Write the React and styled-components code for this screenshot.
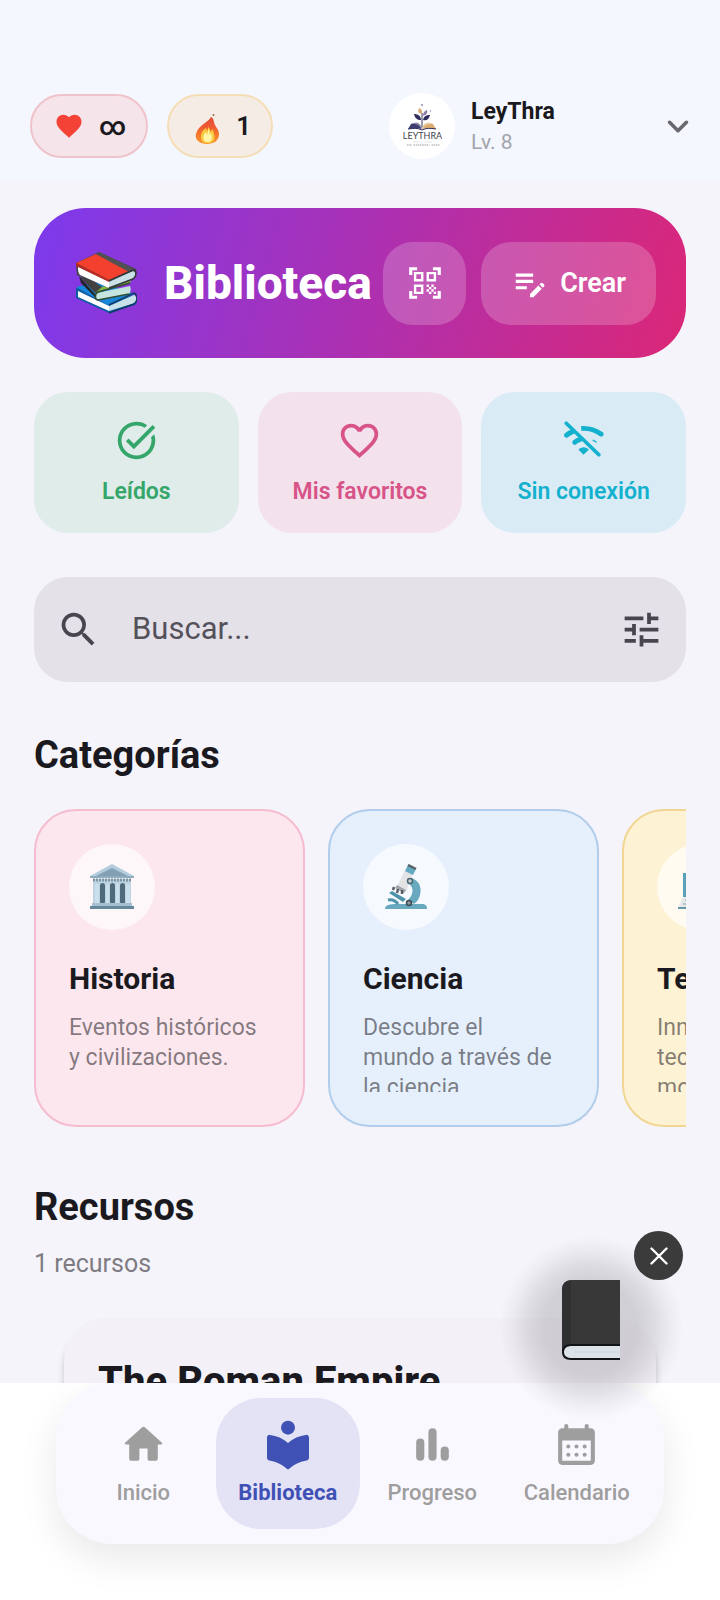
import React from 'react';
import styled, { createGlobalStyle } from 'styled-components';
import {
    MdEditNote,
    MdFavorite,
    MdFavoriteBorder,
    MdQrCodeScanner,
    MdSearch,
    MdTaskAlt,
    MdTune
} from 'react-icons/md';

const categories = [
    {
        id: 'historia',
        name: 'Historia',
        text: 'Eventos históricos\ny civilizaciones.',
        background: '#fce7ee',
        border: '#f5bccf',
        Icon: MuseumIcon
    },
    {
        id: 'ciencia',
        name: 'Ciencia',
        text: 'Descubre el\nmundo a través de\nla ciencia.',
        background: '#e6f0fd',
        border: '#b0cdeb',
        Icon: MicroscopeIcon
    },
    {
        id: 'tecnologia',
        name: 'Tecnología',
        text: 'Innovación y\ntecnología\nmoderna.',
        background: '#fef2d4',
        border: '#f0d692',
        Icon: LaptopIcon
    }
];

const shortcuts = [
    { id: 'read', label: 'Leídos', color: '#34a669', background: '#dfece9', icon: <MdTaskAlt /> },
    { id: 'favorites', label: 'Mis favoritos', color: '#d85388', background: '#f3e2ec', icon: <MdFavoriteBorder /> },
    { id: 'offline', label: 'Sin conexión', color: '#14b1ce', background: '#d9ecf6', icon: <WifiOffIcon /> }
];

const tabs = [
    { id: 'home', label: 'Inicio', Icon: HomeIcon },
    { id: 'library', label: 'Biblioteca', Icon: LibraryIcon },
    { id: 'progress', label: 'Progreso', Icon: BarsIcon },
    { id: 'calendar', label: 'Calendario', Icon: CalendarIcon }
];

const App = () => {
    return (
        <Screen>
            <GlobalStyle />

            <Header>
                <Pill $background="#f5e5eb" $border="#f0c3cb">
                    <MdFavorite size={30} color="#f44336" />
                    <span>∞</span>
                </Pill>
                <Pill $background="#f5ede5" $border="#f5deb6">
                    <FlameIcon />
                    <span>1</span>
                </Pill>
                <Profile>
                    <Avatar><LogoIcon /></Avatar>
                    <ProfileText>
                        <ProfileName>LeyThra</ProfileName>
                        <ProfileLevel>Lv. 8</ProfileLevel>
                    </ProfileText>
                    <ChevronIcon />
                </Profile>
            </Header>

            <Main>
                <Banner>
                    <BooksIcon />
                    <BannerTitle>Biblioteca</BannerTitle>
                    <BannerActions>
                        <ScanButton aria-label="Escanear"><MdQrCodeScanner size={38} /></ScanButton>
                        <CreateButton><MdEditNote size={38} />Crear</CreateButton>
                    </BannerActions>
                </Banner>

                <Shortcuts>
                    {shortcuts.map(item => (
                        <Shortcut key={item.id} $color={item.color} $background={item.background}>
                            {item.icon}
                            {item.label}
                        </Shortcut>
                    ))}
                </Shortcuts>

                <SearchBar>
                    <MdSearch size={45} />
                    <SearchInput type="text" placeholder="Buscar..." aria-label="Buscar" />
                    <FilterButton aria-label="Filtros"><MdTune size={45} /></FilterButton>
                </SearchBar>

                <SectionTitle>Categorías</SectionTitle>
                <CategoryList>
                    {categories.map(({ id, name, text, background, border, Icon }) => (
                        <Category key={id} $background={background} $border={border}>
                            <CategoryBody>
                                <CategoryBadge><Icon /></CategoryBadge>
                                <CategoryName>{name}</CategoryName>
                                <CategoryText>{text}</CategoryText>
                            </CategoryBody>
                        </Category>
                    ))}
                </CategoryList>

                <ResourcesTitle>Recursos</ResourcesTitle>
                <ResourceCount>1 recursos</ResourceCount>
                <Resource>
                    <ResourceName>The Roman Empire</ResourceName>
                </Resource>
            </Main>

            <Footer>
                <TabBar>
                    {tabs.map(({ id, label, Icon }) => (
                        <Tab key={id} href={`#${id}`} $active={id === 'library'}>
                            <TabIcon><Icon /></TabIcon>
                            {label}
                        </Tab>
                    ))}
                </TabBar>
            </Footer>

            <Floating>
                <Glow><BookIcon /></Glow>
                <CloseButton aria-label="Cerrar">
                    <svg width="18" height="18" viewBox="0 0 18 18" fill="none" stroke="#fff" strokeWidth="2.4" strokeLinecap="round">
                        <path d="M1.500 1.500l15 15M16.500 1.500l-15 15" />
                    </svg>
                </CloseButton>
            </Floating>
        </Screen>
    );
}

export default App;

function FlameIcon() {
    return (
        <svg width="30" height="38" viewBox="-3 -6 30 38">
            <defs>
                <linearGradient id="flame" x1="0" y1="0" x2="0" y2="1">
                    <stop offset="0" stopColor="#dd4b39" />
                    <stop offset="0.35" stopColor="#ee5a33" />
                    <stop offset="0.75" stopColor="#f9802a" />
                    <stop offset="1" stopColor="#f9982a" />
                </linearGradient>
            </defs>
            <circle cx="19.500" cy="2" r="1" fill="#a06a50" />
            <path d="M17 4c-2 5-13 8-15 17-1.500 6 4 10 11 10s12-3.500 12-10c0-4-2-5-4-9-1.500-3-1-7-4-8z" fill="url(#flame)" />
            <path d="M12 15c-4 3-5 5-5 9 0 4 2 6 6.500 6s7-2 7-6c0-3-1-5-2-8-1 1-1 2-2 3 0-2-1-3-2-5-1 2-1 3-1 5z" fill="#fbc93f" />
            <path d="M14.500 16c-1 2-1 4-1 6l-2-3c-2 3-2.500 5-2 7 .5 2 2 3 4 3s4.500-1 4.500-4c0-2-.5-4-1-5l-1.500 2c0-2 0-4-1-6z" fill="#fff6a8" />
        </svg>
    );
}

function LogoIcon() {
    return (
        <svg width="66" height="66" viewBox="0 0 66 66">
            <circle cx="33" cy="12" r="1" fill="#8b8ba8" />
            <path d="M33 36V20" stroke="#34325c" strokeWidth="1" />
            <path d="M32.500 21c-4-1-4-4-2-6 3 2 3 4 2 6z" fill="#d9ab72" />
            <path d="M34 23c0-3 1-5 4-6 1 3-1 5-4 6z" fill="#8d7aa8" />
            <path d="M32 27c-4 0-6-2-7-6 4 0 7 2 7 6zM34 27c1-4 3-5 7-5-1 4-3 6-7 5z" fill="#2f2c5c" />
            <circle cx="41.500" cy="18" r=".7" fill="#8d7aa8" />
            <path d="M33 36c-2-7-7-7-11-5l-3 5c6-1 10-1 14 0z" fill="#403d70" />
            <path d="M33 36c2-7 7-7 11-5l3 5c-6-1-10-1-14 0z" fill="#dcae73" />
            <path d="M23 30c5 0 8 2 10 6M43 30c-5 0-8 2-10 6" stroke="#fff" strokeWidth=".6" fill="none" />
            <path d="M19 36c6-1 10-1 14 1 4-2 8-2 14-1" stroke="#2f2c5c" strokeWidth="1" fill="none" />
            <text x="33.500" y="46" textAnchor="middle" fontFamily="Lato, sans-serif" fontSize="9" fill="#44424e">LEYTHRA</text>
            <path d="M24 49h7M36 49h7" stroke="#d5d5dc" strokeWidth=".6" />
            <path d="M18 52h5m1.500 0h16m2 0h8" stroke="#9a9aa5" strokeWidth="1" strokeDasharray="1.500 .7" />
        </svg>
    );
}

function ChevronIcon() {
    return (
        <svg width="44" height="44" viewBox="0 0 24 24" fill="#69696e">
            <path d="M8.120 9.290L12 13.170l3.880-3.880c.39-.39 1.020-.39 1.410 0 .39.39.39 1.020 0 1.410l-4.590 4.590c-.39.39-1.020.39-1.410 0L6.700 10.700c-.39-.39-.39-1.020 0-1.410.39-.38 1.030-.39 1.420 0z" />
        </svg>
    );
}

function BooksIcon() {
    return (
        <svg width="62" height="62" viewBox="0 0 62 62">
            <path d="M1 36l10-4 50 14c1 3 1 5-1 7L34 61 1 46z" fill="#0c5ba5" />
            <path d="M1 35l22-5 37 12-26 12z" fill="#1a86d9" />
            <path d="M3 39l31 15v5L3 45z" fill="#fff" />
            <path d="M34 54l25-11c3 1 3 5 1 8L34 59z" fill="#c7e2e8" />
            <path d="M34 53l25-12c4 2 4 8 0 11L34 61" fill="none" stroke="#123b63" strokeWidth="1.500" />
            <path d="M4 24l20 23-4-2L6 31z" fill="#202326" />
            <path d="M5 25l15 16 10-4-18-12z" fill="#424242" />
            <path d="M20 41l35-10c2-4 1-4-1-2l-27 6z" fill="#84b641" />
            <path d="M22 41l33-7c1 3 1 5-1 8l-31 6c-3-2-3-5-1-7z" fill="#c5e4df" />
            <path d="M55 31L23 40c-4 2-3 8 0 8l31-6" fill="none" stroke="#314c31" strokeWidth="1.600" />
            <path d="M1 11L24 0l37 17c1 4 0 7-3 9L35 36 2 23z" fill="#3f4245" />
            <path d="M1 11l20-9 33 17-20 9z" fill="#f4402f" />
            <path d="M21 2l3-2 36 17-6 3z" fill="#525252" />
            <path d="M1 11l33 17v3L1 14z" fill="#b82a22" />
            <path d="M3 15l31 15v6L5 23c-2-2-2-5-2-8z" fill="#fff" />
            <path d="M34 29l24-10c3 1 3 4 1 7L34 36z" fill="#c9e1e6" />
            <path d="M34 29l24-11c4 1 4 6 0 9L34 36" fill="none" stroke="#33383b" strokeWidth="1.500" />
        </svg>
    );
}

function WifiOffIcon() {
    return (
        <svg viewBox="0 0 24 24" fill="none" stroke="currentColor" strokeLinecap="round">
            <path d="M2.800 2.800L20.200 19.600" strokeWidth="2" />
            <path d="M2.900 9.200Q4.400 8 5.900 7.400" strokeWidth="2.600" />
            <path d="M7.300 13q1.300-1.200 3-1.600" strokeWidth="2.600" />
            <path d="M10.800 5.600q5.800-.4 10.600 3" strokeWidth="2.600" strokeLinecap="butt" />
            <path d="M21.200 8.500l.2.100" strokeWidth="2.600" />
            <path d="M17.200 11.900l1.600.9" strokeWidth=".7" />
            <path d="M9.800 16.800c1.500-1.100 3.100-1.100 4.600 0L12 19.100z" fill="currentColor" strokeWidth=".8" strokeLinejoin="round" />
        </svg>
    );
}

function MuseumIcon() {
    return (
        <svg width="46" height="46" viewBox="0 0 46 46">
            <path d="M4 15h38v25H4z" fill="#bdd3e1" />
            <rect x="11" y="19" width="5" height="21" rx="2.500" fill="#4e6a7b" />
            <rect x="21" y="19" width="5" height="21" rx="2.500" fill="#4e6a7b" />
            <rect x="31" y="19" width="5" height="21" rx="2.500" fill="#4e6a7b" />
            <path d="M6 20h4v20H6zM17 20h3v20h-3zM27 20h3v20h-3zM37 20h4v20h-4z" fill="#c9dfec" />
            <path d="M23 0l22 12v2H1v-2z" fill="#b4cddc" />
            <path d="M23 4l16 8H7z" fill="#829fb3" />
            <path d="M1 13h44" stroke="#6d8da1" />
            <path d="M4 16h38" stroke="#7c97a8" strokeWidth="3" strokeDasharray="2 1" />
            <path d="M3 39h40v3H3z" fill="#a5c0d1" />
            <path d="M1 42h44v3H1z" fill="#67879b" />
        </svg>
    );
}

function MicroscopeIcon() {
    return (
        <svg width="46" height="46" viewBox="0 0 46 46">
            <path d="M28 14c8 2 11 9 9 17-1 4-3 7-6 9l-6-4c5-5 7-12 0-17z" fill="#69a9bf" />
            <path d="M2 44c1-4 7-4 16-4h20c5 0 6 2 6 5H2z" fill="#69a9bf" />
            <path d="M6 29l3-2 14 8-3 3z" fill="#4f93aa" />
            <path d="M5 36c4-1 7 0 10 4" fill="none" stroke="#4f93aa" strokeWidth="3" />
            <path d="M22 6l8 4-7 18-9-5z" fill="#e2e3e5" />
            <path d="M14 21l9 5-2 3-9-5z" fill="#a2a5aa" />
            <path d="M11 23l-1 3M15 25l-1 4M19 26v4" stroke="#565c62" strokeWidth="2.400" />
            <path d="M25 1l8 4-3 6-8-4z" fill="#62a9c1" />
            <path d="M25 1l8 4" stroke="#596269" strokeWidth="2.500" />
            <circle cx="27" cy="17" r="2.500" fill="#c6cdd1" stroke="#496775" strokeWidth="1.500" />
            <circle cx="26" cy="39" r="2.500" fill="#8f989d" stroke="#3a4c55" strokeWidth="1.500" />
        </svg>
    );
}

function LaptopIcon() {
    return (
        <svg width="46" height="46" viewBox="0 0 46 46">
            <path d="M6 9h34v26H6z" fill="#5ba0ba" />
            <path d="M9 12h28v20H9z" fill="#a9d9ea" />
            <path d="M6 33h34l5 11H1z" fill="#e6e8ea" />
            <path d="M8 36h30M6 40h34" stroke="#adb5bb" strokeWidth="1.500" strokeDasharray="3 1" />
            <path d="M1 43h44v2H1z" fill="#6597a6" />
        </svg>
    );
}

function BookIcon() {
    return (
        <svg width="58" height="80" viewBox="0 0 58 80">
            <path d="M10 0h48v66H8l-8 6V10Q0 0 10 0z" fill="#383838" />
            <path d="M9 0v64q-6 0-9 6V10Q0 1 9 0z" fill="#2f3032" />
            <path d="M58 64H9c-6 0-9 3-9 8s3 8 9 8h49z" fill="#101417" />
            <path d="M58 66H10c-5 0-8 2-8 6s3 6 8 6h48z" fill="#dbe3e8" />
            <path d="M58 72H12" stroke="#cbd4da" />
        </svg>
    );
}

function HomeIcon() {
    return (
        <svg width="49" height="49" viewBox="0 0 24 24" fill="currentColor">
            <path d="M10 19v-5h4v5c0 .55.45 1 1 1h3c.55 0 1-.45 1-1v-7h1.700c.46 0 .68-.57.33-.87L12.670 3.600c-.38-.34-.96-.34-1.340 0l-8.360 7.530c-.34.3-.13.87.33.87H5v7c0 .55.45 1 1 1h3c.55 0 1-.45 1-1z" />
        </svg>
    );
}

function LibraryIcon() {
    return (
        <svg width="56" height="56" viewBox="0 0 24 24" fill="currentColor">
            <circle cx="12" cy="5" r="3" />
            <path d="M12 11.550C9.900 9.600 7.100 8.400 4.300 8.100 3.600 8 3 8.600 3 9.300v8.600c0 .6.450 1.100 1.050 1.200 2.500.4 4.900 1.400 6.800 3l.6.500c.3.300.8.300 1.100 0l.6-.5c1.900-1.600 4.300-2.600 6.800-3 .6-.1 1.050-.6 1.050-1.200V9.300c0-.7-.6-1.300-1.300-1.200-2.800.3-5.600 1.500-7.700 3.450z" />
        </svg>
    );
}

function BarsIcon() {
    return (
        <svg width="49" height="49" viewBox="0 0 24 24" fill="currentColor">
            <rect x="4" y="9" width="4" height="11" rx="2" />
            <rect x="10" y="4" width="4" height="16" rx="2" />
            <rect x="16" y="13" width="4" height="7" rx="2" />
        </svg>
    );
}

function CalendarIcon() {
    return (
        <svg width="49" height="49" viewBox="0 0 24 24" fill="currentColor">
            <path d="M19 4h-1V3c0-.55-.45-1-1-1s-1 .45-1 1v1H8V3c0-.55-.45-1-1-1s-1 .45-1 1v1H5c-1.110 0-2 .9-2 2v14c0 1.100.89 2 2 2h14c1.100 0 2-.9 2-2V6c0-1.100-.9-2-2-2zm0 16H5V10h14v10z" />
            <path d="M8 13h.01M12 13h.01M16 13h.01M8 17h.01M12 17h.01M16 17h.01" stroke="currentColor" strokeWidth="2" strokeLinecap="round" />
        </svg>
    );
}

const GlobalStyle = createGlobalStyle`
  * {
    box-sizing: border-box;
  }

  body {
    margin: 0;
    font-family: Roboto, "Liberation Sans", sans-serif;
    color: #1b1920;
    background: #ffffff;
  }

  button, input {
    font: inherit;
    border: 0;
    padding: 0;
  }

  svg {
    display: block;
    flex-shrink: 0;
  }
`;

const Screen = styled.div`
  position: relative;
  display: flex;
  flex-direction: column;
  height: 100vh;
  overflow: hidden;
`;

const Header = styled.header`
  display: flex;
  align-items: center;
  padding: 93px 20px 20px 30px;
  background: #f4f7fe;
`;

const Pill = styled.div`
  display: flex;
  align-items: center;
  gap: 15px;
  height: 64px;
  margin-right: 19px;
  padding: 0 20px 0 22px;
  border: 2px solid ${props => props.$border};
  border-radius: 32px;
  background: ${props => props.$background};
  font-size: 26px;
  font-weight: 600;
`;

const Profile = styled.div`
  display: flex;
  align-items: center;
  width: 311px;
  margin-left: auto;
`;

const Avatar = styled.div`
  width: 66px;
  height: 66px;
  border-radius: 50%;
  background: #ffffff;
`;

const ProfileText = styled.div`
  flex: 1;
  padding: 2px 0 0 16px;
`;

const ProfileName = styled.div`
  font-size: 23px;
  font-weight: 700;
  line-height: 30px;
`;

const ProfileLevel = styled.div`
  font-size: 21px;
  line-height: 30px;
  color: #a3a5ab;
`;

const Main = styled.main`
  flex: 1;
  min-height: 0;
  padding: 29px 34px 0;
  overflow: hidden;
  background: #f6f4fb;
`;

const Banner = styled.section`
  display: flex;
  align-items: center;
  height: 150px;
  padding: 0 30px 0 41px;
  border-radius: 52px;
  background: linear-gradient(105deg, #7c3aed, #db2777);
  color: #ffffff;
`;

const BannerTitle = styled.h1`
  margin: 0 0 0 27px;
  font-size: 46px;
  font-weight: 800;
  line-height: 54px;
`;

const BannerActions = styled.div`
  display: flex;
  gap: 15px;
  margin-left: auto;
`;

const ScanButton = styled.button`
  display: flex;
  align-items: center;
  justify-content: center;
  width: 83px;
  height: 83px;
  border-radius: 30px;
  background: rgba(255, 255, 255, 0.2);
  color: #ffffff;
`;

const CreateButton = styled(ScanButton)`
  gap: 11px;
  width: auto;
  padding: 0 30px;
  font-size: 27px;
  font-weight: 600;
`;

const Shortcuts = styled.nav`
  display: grid;
  grid-template-columns: repeat(3, 1fr);
  gap: 19px;
  margin-top: 34px;
`;

const Shortcut = styled.button`
  display: flex;
  flex-direction: column;
  align-items: center;
  gap: 14px;
  height: 141px;
  padding-top: 26px;
  border-radius: 34px;
  background: ${props => props.$background};
  color: ${props => props.$color};
  font-size: 23px;
  font-weight: 600;
  line-height: 30px;

  svg {
    width: 45px;
    height: 45px;
  }
`;

const SearchBar = styled.div`
  display: flex;
  align-items: center;
  height: 105px;
  margin-top: 44px;
  padding: 0 22px;
  border-radius: 34px;
  background: #e4e1e8;
  color: #49454f;
`;

const SearchInput = styled.input`
  flex: 1;
  min-width: 0;
  padding: 0 0 2px 31px;
  background: transparent;
  font-size: 31px;
  color: #49454f;
  outline: none;

  &::placeholder {
    color: #55515b;
    opacity: 1;
  }
`;

const FilterButton = styled.button`
  background: transparent;
  color: #49454f;
`;

const SectionTitle = styled.h2`
  margin: 51px 0 32px;
  font-size: 38px;
  font-weight: 700;
  line-height: 44px;
`;

const ResourcesTitle = styled(SectionTitle)`
  margin: 58px 0 21px;
`;

const CategoryList = styled.div`
  display: flex;
  gap: 23px;
  overflow-x: auto;
  scrollbar-width: none;
`;

const Category = styled.article`
  flex: 0 0 271px;
  height: 318px;
  padding: 33px;
  border: 2px solid ${props => props.$border};
  border-radius: 42px;
  background: ${props => props.$background};
`;

const CategoryBody = styled.div`
  height: 100%;
  overflow: hidden;
`;

const CategoryBadge = styled.div`
  display: flex;
  align-items: center;
  justify-content: center;
  width: 86px;
  height: 86px;
  border-radius: 50%;
  background: rgba(255, 255, 255, 0.65);
`;

const CategoryName = styled.h3`
  margin: 30px 0 15px;
  font-size: 30px;
  font-weight: 700;
  line-height: 38px;
`;

const CategoryText = styled.p`
  margin: 0;
  font-size: 23px;
  line-height: 30px;
  white-space: pre;
  color: rgba(27, 25, 32, 0.55);
`;

const ResourceCount = styled.p`
  margin: 0;
  font-size: 25px;
  line-height: 28px;
  color: #7e7c82;
`;

const Resource = styled.article`
  margin: 40px 30px 0;
  padding: 40px 34px;
  border-radius: 42px;
  background: #f3f1f7;
  box-shadow: 0 8px 6px rgba(0, 0, 0, 0.2);
`;

const ResourceName = styled.h3`
  margin: 0;
  font-size: 40px;
  font-weight: 800;
  line-height: 48px;
`;

const Footer = styled.footer`
  padding: 0 56px 56px;
  background: #ffffff;
  overflow: hidden;
`;

const TabBar = styled.nav`
  display: flex;
  padding: 15px;
  border-radius: 56px;
  background: #faf8ff;
  box-shadow: 0 15px 38px rgba(0, 0, 0, 0.09);
`;

const Tab = styled.a`
  display: flex;
  flex: 1;
  flex-direction: column;
  align-items: center;
  height: 131px;
  padding-top: 18px;
  border-radius: 45px;
  background: ${props => (props.$active ? '#e4e3f5' : 'transparent')};
  color: ${props => (props.$active ? '#3f51b5' : '#9e9e9e')};
  font-size: 22px;
  font-weight: ${props => (props.$active ? 700 : 500)};
  line-height: 30px;
  text-decoration: none;
`;

const TabIcon = styled.span`
  display: flex;
  align-items: center;
  height: 56px;
  margin-bottom: 6px;
`;

const Floating = styled.aside`
  position: absolute;
  right: 37px;
  bottom: 180px;
  width: 184px;
  height: 189px;
`;

const Glow = styled.div`
  display: flex;
  justify-content: center;
  width: 184px;
  height: 189px;
  padding-top: 49px;
  background: radial-gradient(circle 92px at 92px 97px, rgba(20, 18, 24, 0.16) 50%, rgba(20, 18, 24, 0.11) 68%, rgba(20, 18, 24, 0.04) 86%, transparent);
`;

const CloseButton = styled.button`
  position: absolute;
  top: 0;
  right: 0;
  display: flex;
  align-items: center;
  justify-content: center;
  width: 49px;
  height: 49px;
  border-radius: 50%;
  background: #3b3b3c;
`;
